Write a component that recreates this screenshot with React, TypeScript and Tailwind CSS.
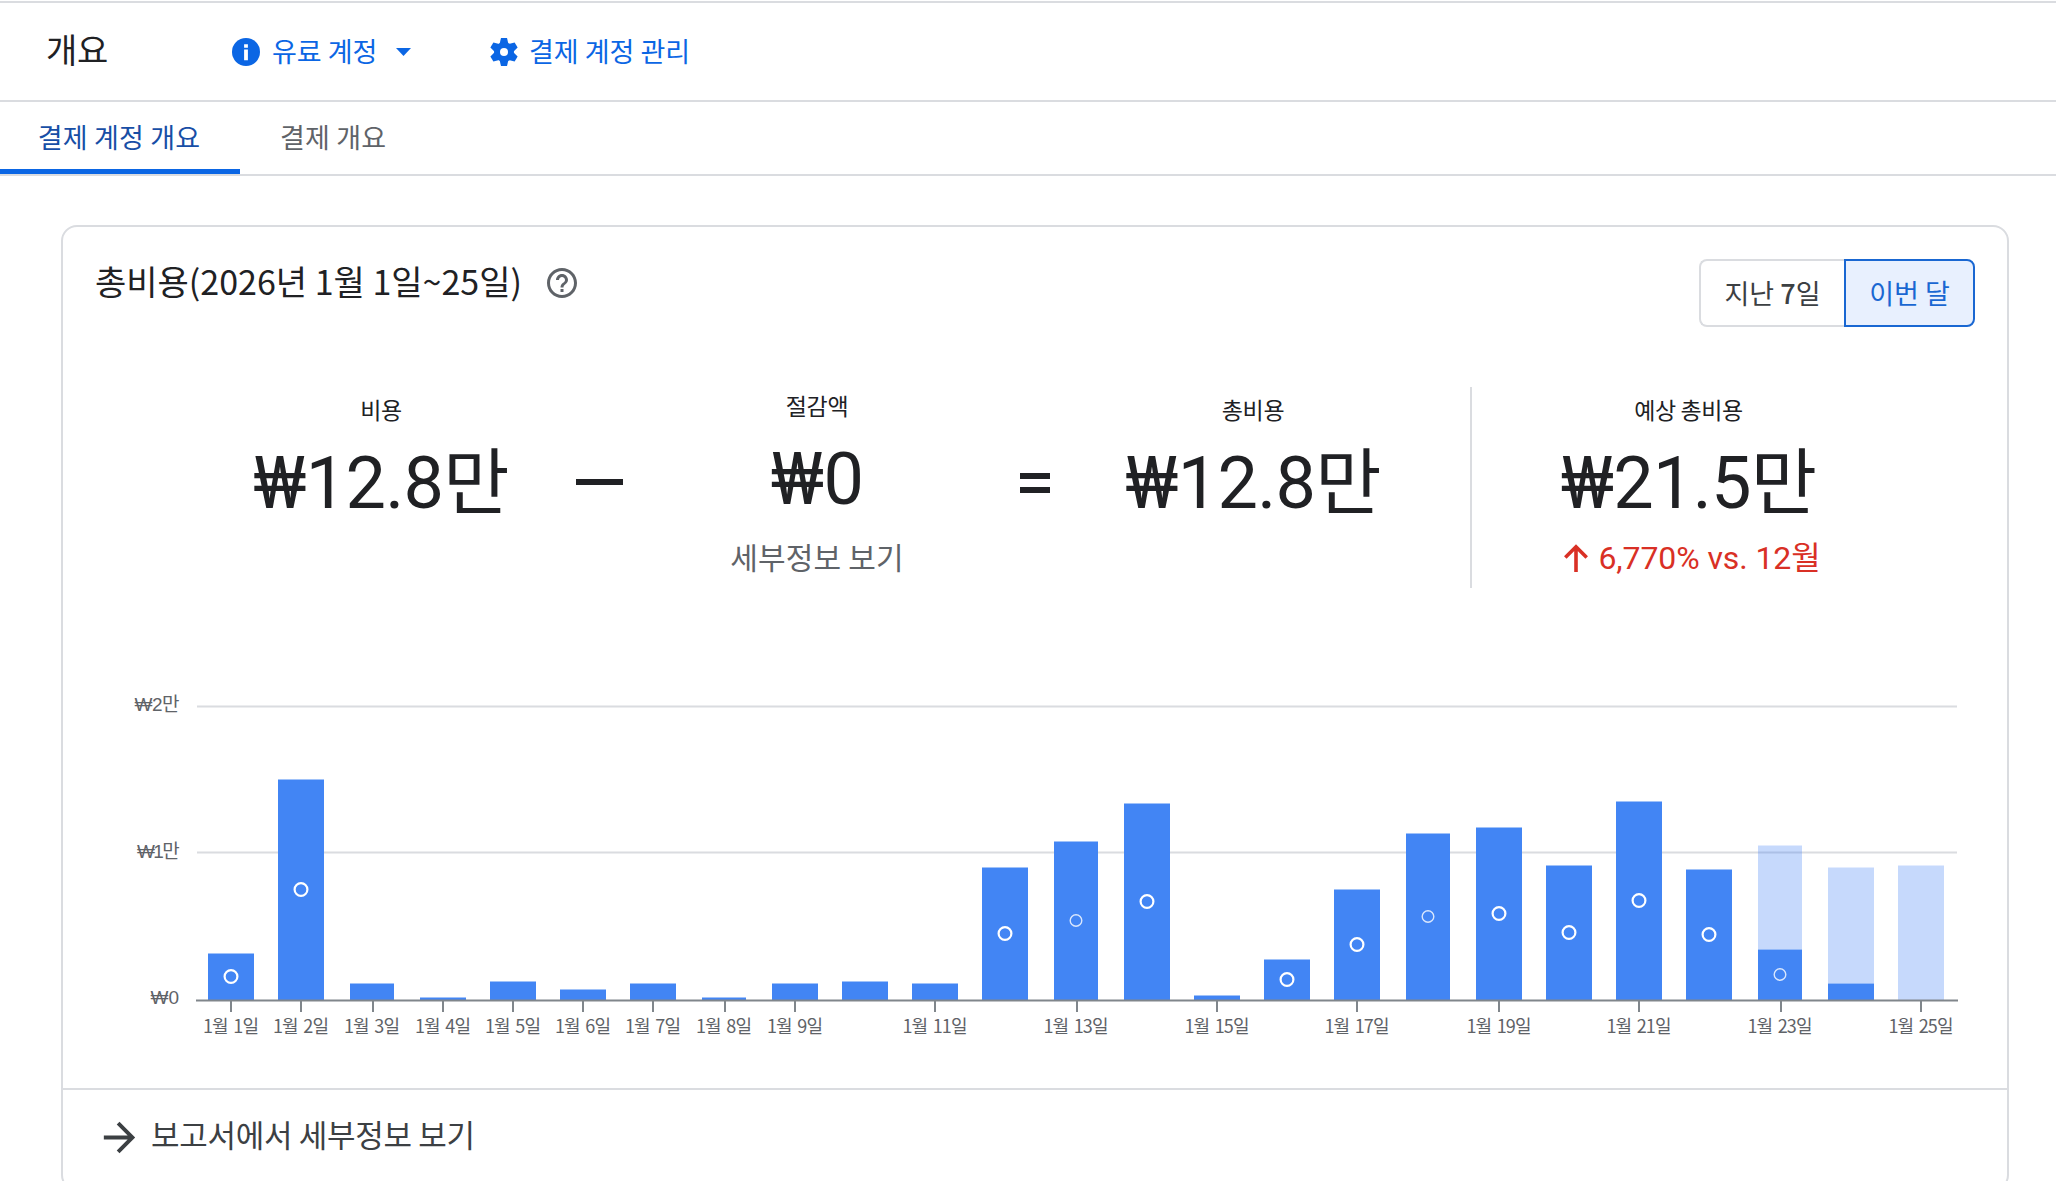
import { MdArrowForward, MdHelpOutline } from "react-icons/md"

type Day = { cost: number; forecast?: number; marker?: boolean; label?: boolean }

// bar heights in px above the axis
const days: Day[] = [
  { cost: 47, marker: true, label: true },
  { cost: 221, marker: true, label: true },
  { cost: 17, label: true },
  { cost: 3, label: true },
  { cost: 19, label: true },
  { cost: 11, label: true },
  { cost: 17, label: true },
  { cost: 3, label: true },
  { cost: 17, label: true },
  { cost: 19 },
  { cost: 17, label: true },
  { cost: 133, marker: true },
  { cost: 159, marker: true, label: true },
  { cost: 197, marker: true },
  { cost: 5, label: true },
  { cost: 41, marker: true },
  { cost: 111, marker: true, label: true },
  { cost: 167, marker: true },
  { cost: 173, marker: true, label: true },
  { cost: 135, marker: true },
  { cost: 199, marker: true, label: true },
  { cost: 131, marker: true },
  { cost: 51, forecast: 155, marker: true, label: true },
  { cost: 17, forecast: 133 },
  { cost: 0, forecast: 135, label: true },
]

const AXIS_Y = 310.5

function CostChart() {
  return (
    <svg
      className="block font-['Noto_Sans_CJK_KR',sans-serif] text-[19px] tracking-[-0.7px]"
      width={1850}
      height={360}
      role="img"
      aria-label="일별 비용"
    >
      <g stroke="#dadce0" strokeWidth={2}>
        <line x1={77} x2={1837} y1={16.5} y2={16.5} />
        <line x1={77} x2={1837} y1={162.5} y2={162.5} />
      </g>
      <g
        className="font-['Liberation_Sans','Noto_Sans_CJK_KR',sans-serif] tracking-[-0.5px]"
        fill="#5f6368"
        textAnchor="end"
      >
        <text x={59} y={21}>₩2만</text>
        <text className="tracking-[-1.7px]" x={58} y={168}>₩1만</text>
        <text className="tracking-normal" x={59} y={314}>₩0</text>
      </g>
      {days.map((day, i) => {
        const x = 88 + 70 * i + 2 * Math.floor((i + 3) / 5)
        const narrow = i % 5 === 2
        const width = narrow ? 44 : 46
        const thin = narrow && i > 2
        return (
          <g key={i}>
            {day.forecast && (
              <rect
                x={x}
                y={AXIS_Y - day.forecast}
                width={width}
                height={day.forecast - day.cost}
                fill="#4280f6"
                fillOpacity={0.3}
              />
            )}
            <rect x={x} y={AXIS_Y - day.cost} width={width} height={day.cost} fill="#4285f4" />
            {day.marker && (
              <circle
                cx={x + width / 2}
                cy={AXIS_Y - 0.5 - day.cost / 2}
                r={thin ? 5.8 : 6.4}
                fill="none"
                stroke="#fff"
                strokeWidth={thin ? 1.4 : 2.2}
                strokeOpacity={thin ? 0.8 : 1}
              />
            )}
            {day.label && (
              <>
                <line x1={x + 23} x2={x + 23} y1={311} y2={322} stroke="#80868b" strokeWidth={2} />
                <text
                  className="text-[18px] tracking-[-0.9px] [word-spacing:2.5px]"
                  x={x + (narrow ? 21.5 : 22.5)}
                  y={343}
                  textAnchor="middle"
                  fill="#5f6368"
                >
                  1월 {i + 1}일
                </text>
              </>
            )}
          </g>
        )
      })}
      <line x1={76} x2={1838} y1={AXIS_Y} y2={AXIS_Y} stroke="#80868b" strokeWidth={2} />
    </svg>
  )
}

function InfoIcon() {
  return (
    <svg className="size-[28px]" viewBox="0 0 28 28" aria-hidden="true">
      <circle cx="14" cy="14" r="14" fill="currentColor" />
      <path d="M12.1 6.2h3.8v3.6h-3.8zM12.1 11.6h3.8v10.6h-3.8z" fill="#fff" />
    </svg>
  )
}

function GearIcon() {
  return (
    <svg className="size-[28px]" viewBox="0 0 28 28" fill="currentColor" aria-hidden="true">
      {[0, 60, 120].map((angle) => (
        <path
          key={angle}
          d="M11 0h6l1.200 5v18L17 28h-6l-1.200-5V5z"
          transform={`rotate(${angle} 14 14)`}
        />
      ))}
      <circle cx="14" cy="14" r="10" />
      <circle cx="14" cy="14" r="4" fill="#fff" />
    </svg>
  )
}

function Metric({ label, value }: { label: string; value: string }) {
  return (
    <>
      <div className="text-[23px] leading-[34px] tracking-[-0.4px]">{label}</div>
      <div className="mt-[17px] font-[Roboto,'Noto_Sans_CJK_KR',sans-serif] text-[72px] leading-[82px] tracking-[-0.7px] whitespace-nowrap">
        {value}
      </div>
    </>
  )
}

export default function App() {
  return (
    <div className="h-[1181px] w-[2056px] overflow-hidden bg-white pt-px font-['Noto_Sans_CJK_KR',sans-serif] text-[#202124]">
      <header className="flex h-[101px] items-center border-y-2 border-[#dadce0] pl-[46px]">
        <h1 className="w-[186px] pb-[6px] text-[34px] tracking-[-0.2px]">개요</h1>
        <button className="flex w-[258px] items-center text-[27px] text-[#0b66e4]">
          <InfoIcon />
          <span className="ml-[12px]">유료 계정</span>
          <svg className="ml-[19px] h-[8px] w-[15px]" viewBox="0 0 15 8" aria-hidden="true">
            <path d="M0 0h15L7.500 8z" fill="currentColor" />
          </svg>
        </button>
        <button className="flex items-center text-[27px] text-[#0b66e4]">
          <GearIcon />
          <span className="ml-[11px]">결제 계정 관리</span>
        </button>
      </header>

      <nav className="flex h-[74px] border-b-2 border-[#dadce0] text-[27px] tracking-[0.2px]">
        <button className="w-[240px] border-b-[5px] border-[#0b66e4] pt-[3px] pr-[2px] text-[#174ea6]">
          결제 계정 개요
        </button>
        <button className="px-[40px] pt-[3px] pb-[5px] text-[#5f6368]">결제 개요</button>
      </nav>

      <main className="mt-[49px] ml-[61px] h-[966px] w-[1948px] rounded-[16px] border-2 border-[#dadce0]">
        <div className="flex h-[160px] items-start justify-between pr-[32px] pl-[32px]">
          <div className="flex h-[112px] items-center text-[34px]">
            <h2 className="pb-[5px]">총비용(2026년 1월 1일~25일)</h2>
            <MdHelpOutline className="ml-[22px] size-[36px] text-[#5f6368]" />
          </div>
          <div className="mt-[32px] flex h-[68px] text-[27px]">
            <button className="w-[145px] rounded-l-[8px] border-2 border-r-0 border-[#dadce0] text-[#3c4043]">
              지난 <span className="font-medium">7</span>일
            </button>
            <button className="w-[131px] rounded-r-[8px] border-2 border-[#1967d2] bg-[#e8f0fe] text-[#1967d2]">
              이번 달
            </button>
          </div>
        </div>

        <section className="flex h-[303px] pl-[130px] text-center">
          <div className="w-[376px] pt-[5px]">
            <Metric label="비용" value="₩12.8만" />
          </div>
          <div className="flex w-[60px] justify-center pt-[92px]">
            <div className="h-[6px] w-[47px] bg-[#202124]" />
          </div>
          <div className="w-[376px] pt-px">
            <Metric label="절감액" value="₩0" />
            <a className="mt-[13px] block text-[30px] leading-[44px] tracking-[0.2px] text-[#5f6368]">
              세부정보 보기
            </a>
          </div>
          <div className="flex w-[60px] flex-col items-center gap-[8px] pt-[86px]">
            <div className="h-[6px] w-[30px] bg-[#202124]" />
            <div className="h-[6px] w-[30px] bg-[#202124]" />
          </div>
          <div className="w-[376px] pt-[5px]">
            <Metric label="총비용" value="₩12.8만" />
          </div>
          <div className="ml-[29px] h-[201px] w-[435px] border-l-2 border-[#dadce0] pt-[5px]">
            <Metric label="예상 총비용" value="₩21.5만" />
            <div className="mt-[11px] flex items-center justify-center pl-[8px] font-[Roboto,'Noto_Sans_CJK_KR',sans-serif] text-[32px] leading-[44px] tracking-[-0.1px] text-[#d93025]">
              <svg
                className="mr-[10px] h-[28px] w-[24px]"
                viewBox="0 0 24 28"
                fill="none"
                stroke="currentColor"
                strokeWidth="3.6"
                aria-hidden="true"
              >
                <path d="M12 28V3M1.300 13.500L12 2.800l10.700 10.700" />
              </svg>
              6,770% vs. 12월
            </div>
          </div>
        </section>

        <div className="h-[398px] pl-[57px]">
          <CostChart />
        </div>

        <footer className="flex h-[98px] items-center border-t-2 border-[#dadce0] pl-[33px] text-[31px] tracking-[-0.3px] text-[#3c4043]">
          <MdArrowForward className="mb-[2px] size-[47px]" />
          <span className="ml-[8px] pb-[7px]">보고서에서 세부정보 보기</span>
        </footer>
      </main>
    </div>
  )
}
